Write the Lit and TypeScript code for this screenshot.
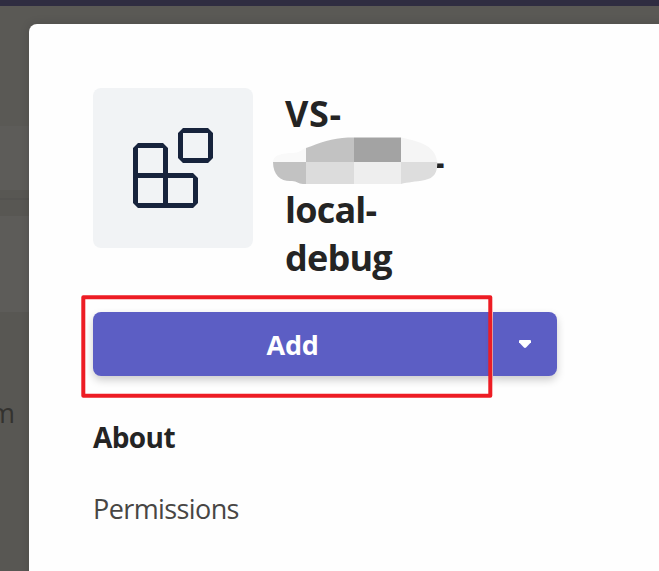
import { LitElement, html, css } from "lit";
import { customElement } from "lit/decorators.js";

@customElement("app-icon")
class AppIcon extends LitElement {
  static styles = css`
    :host {
      display: block;
      width: 160px;
      height: 160px;
      border-radius: 8px;
      background: #f1f3f5;
    }
    svg { display: block; }
  `;
  render() {
    return html`
      <svg width="160" height="160" viewBox="0 0 160 160" fill="#17233c" fill-rule="evenodd">
        <path d="M45 55h25l5 5v25h25l5 5v25l-5 5H45l-5-5V60zM45 60v25h25V60zM45 90v25h25V90zM75 90v25h25V90z" />
        <path d="M90 40h25l5 5v25l-5 5H90l-5-5V45zM90 45v25h25V45z" />
      </svg>
    `;
  }
}

@customElement("split-button")
class SplitButton extends LitElement {
  static styles = css`
    :host {
      position: relative;
      display: flex;
      gap: 1px;
      width: 464px;
      height: 64px;
    }
    .main, .menu {
      border: 0;
      padding: 0;
      margin: 0;
      background: #5c5ec4;
      color: #fff;
      box-shadow: 0 4px 8px rgba(0, 0, 0, 0.2);
      display: flex;
      align-items: center;
      justify-content: center;
    }
    .main {
      flex: 1;
      padding-top: 2px;
      border-radius: 8px 0 0 8px;
      font: 700 27px/40px "Open Sans", "Noto Sans", sans-serif;
      letter-spacing: -0.3px;
    }
    .menu { width: 64px; border-radius: 0 8px 8px 0; }
    .frame { position: absolute; left: -13px; top: -18px; }
  `;
  render() {
    return html`
      <button class="main">Add</button>
      <button class="menu" aria-label="More options">
        <svg width="12" height="8" viewBox="0 0 12 8" fill="#fff">
          <path d="M1 0h10q1 0 1 1v1.300L7.300 7.300q-1.300 1.200-2.600 0L0 2.300V1q0-1 1-1z" />
        </svg>
      </button>
      <svg class="frame" width="414" height="106" viewBox="0 0 414 106" fill="none">
        <rect x="3.300" y="3.200" width="407" height="98.500" stroke="#ed1c24" stroke-width="4" stroke-linejoin="round" />
      </svg>
    `;
  }
}

@customElement("app-root")
class AppRoot extends LitElement {
  static styles = css`
    :host {
      display: block;
      position: relative;
      width: 659px;
      height: 571px;
      overflow: hidden;
      font-family: "Open Sans", "Noto Sans", sans-serif;
      color: #242424;
    }
    .page {
      height: 571px;
      display: flex;
      flex-direction: column;
      background: #585753;
    }
    .bar { height: 6px; background: #2f2d41; }
    .head { height: 120px; background: #5a5955; }
    .card { height: 64px; background: #5d5c59; }
    .rule { height: 8px; border-bottom: 2px solid #545350; }
    .gap { height: 16px; }
    .card.tall { height: 96px; }
    .rest { flex: 1; padding-top: 81px; }
    .word {
      display: block;
      width: 15px;
      direction: rtl;
      white-space: nowrap;
      font-size: 27px;
      line-height: 40px;
      color: #33322f;
    }
    .dialog {
      position: absolute;
      left: 29px;
      top: 24px;
      width: 640px;
      height: 560px;
      box-sizing: border-box;
      padding: 64px;
      border-radius: 8px;
      background: #fefefe;
      box-shadow: 0 0 10px rgba(0, 0, 0, 0.15);
    }
    .intro { display: flex; gap: 32px; height: 224px; }
    h1 {
      position: relative;
      margin: 2px 0 0;
      font-size: 36px;
      line-height: 48px;
      font-weight: 700;
      letter-spacing: -0.8px;
    }
    h1 span { display: block; }
    .lead { letter-spacing: 0.7px; }
    .tail { padding-left: 148px; }
    .mask { position: absolute; left: -13px; top: 46px; }
    .tabs { margin-top: 24px; display: flex; flex-direction: column; }
    .tab {
      height: 72px;
      line-height: 74px;
      font-size: 27px;
      color: #484644;
      letter-spacing: -0.6px;
    }
    .tab.on { font-size: 28px; font-weight: 700; color: #242424; }
  `;
  render() {
    return html`
      <div class="page">
        <div class="bar"></div>
        <div class="head"></div>
        <div class="card"></div>
        <div class="rule"></div>
        <div class="gap"></div>
        <div class="card tall"></div>
        <div class="rest"><span class="word">m</span></div>
      </div>
      <section class="dialog">
        <div class="intro">
          <app-icon></app-icon>
          <h1>
            <span class="lead">VS-</span>
            <span class="tail">-</span>
            <span>local-</span>
            <span>debug</span>
            <svg class="mask" width="166" height="50" viewBox="272 136 166 50">
              <clipPath id="blob">
                <path d="M273 162C273 155 282 153 293 153C300 153 302 149 306 148C320 143 332 138 348 137.500L401 137.500C422 142 435 146 437.300 162C437.500 173 434 178 425 180C415 182 408 182 401 184L303 184C298 184 297 181 292 181C282 182 273 176 273 162Z" />
              </clipPath>
              <g clip-path="url(#blob)">
                <rect x="272" y="136" width="34" height="26" fill="#f9f9f9" />
                <rect x="306" y="136" width="48" height="26" fill="#c2c2c2" />
                <rect x="354" y="136" width="47" height="26" fill="#a3a3a3" />
                <rect x="401" y="136" width="38" height="26" fill="#f5f5f5" />
                <rect x="272" y="162" width="34" height="24" fill="#c2c2c2" />
                <rect x="306" y="162" width="48" height="24" fill="#dcdcdc" />
                <rect x="354" y="162" width="47" height="24" fill="#eeeeee" />
                <rect x="401" y="162" width="38" height="24" fill="#dddddd" />
              </g>
            </svg>
          </h1>
        </div>
        <split-button></split-button>
        <nav class="tabs">
          <div class="tab on">About</div>
          <div class="tab">Permissions</div>
        </nav>
      </section>
    `;
  }
}
